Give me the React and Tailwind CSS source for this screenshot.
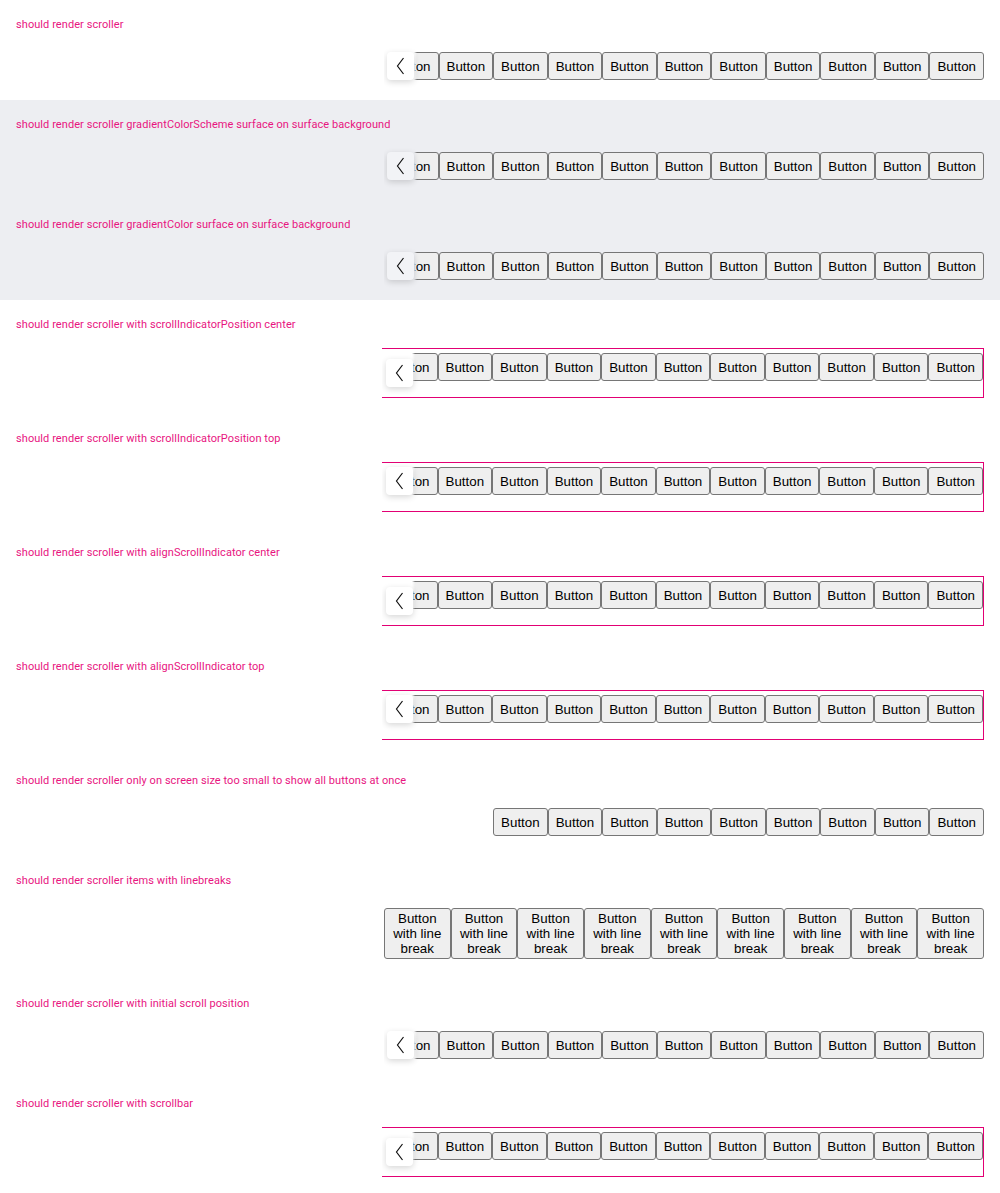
const SECTIONS = [
  { label: 'should render scroller', arrow: 'top' },
  { label: 'should render scroller gradientColorScheme surface on surface background', arrow: 'top', surface: true },
  { label: 'should render scroller gradientColor surface on surface background', arrow: 'top', surface: true },
  { label: 'should render scroller with scrollIndicatorPosition center', arrow: 'center', boxed: true },
  { label: 'should render scroller with scrollIndicatorPosition top', arrow: 'top', boxed: true },
  { label: 'should render scroller with alignScrollIndicator center', arrow: 'center', boxed: true },
  { label: 'should render scroller with alignScrollIndicator top', arrow: 'top', boxed: true },
  { label: 'should render scroller only on screen size too small to show all buttons at once', count: 9, noArrow: true },
  { label: 'should render scroller items with linebreaks', count: 9, noArrow: true, linebreak: true },
  { label: 'should render scroller with initial scroll position', arrow: 'top' },
  { label: 'should render scroller with scrollbar', arrow: 'center', boxed: true },
]

function Chevron() {
  return (
    <svg width="9" height="18" viewBox="0 0 9 18" fill="none">
      <polyline points="7.5,1 1.5,9 7.5,17" stroke="#111" strokeWidth="1.2" strokeLinejoin="miter" />
    </svg>
  )
}

function Btn({ linebreak }) {
  if (linebreak) {
    return (
      <button className="flex-1 min-w-0 py-[2px] px-[4px] bg-[#efefef] border border-[#767676] rounded-[3px] text-[13.333px] leading-[15px] text-black text-center font-['Liberation_Sans',Arial,sans-serif]">
        Button
        <br />
        with line
        <br />
        break
      </button>
    )
  }
  return (
    <button className="shrink-0 h-[28px] px-[7px] bg-[#efefef] border border-[#767676] rounded-[3px] text-[13.333px] leading-[15px] text-black font-['Liberation_Sans',Arial,sans-serif]">
      Button
    </button>
  )
}

function Scroller({ count = 11, arrow, boxed, surface, noArrow, linebreak }) {
  const fade = surface
    ? 'bg-[linear-gradient(to_right,#edeef2_0px,#edeef2_30px,rgba(237,238,242,0)_33px)]'
    : 'bg-[linear-gradient(to_right,#fff_0px,#fff_30px,rgba(255,255,255,0)_33px)]'
  return (
    <div
      className={
        'relative overflow-hidden pt-1 pb-4 ' +
        (boxed ? 'w-[602px] border-t border-r border-b border-[#e20074]' : 'w-[600px]')
      }
    >
      <div className="flex justify-end">
        {Array.from({ length: count }).map((_, i) => (
          <Btn key={i} linebreak={linebreak} />
        ))}
      </div>
      {!noArrow && (
        <>
          <div className={'absolute left-0 top-0 bottom-0 w-[33px] ' + fade} />
          <div
            className={
              'absolute w-[27px] h-[28px] rounded-[4px] flex items-center justify-center shadow-[0_2px_6px_rgba(0,0,0,0.16)] ' +
              (boxed ? 'left-[4px] ' : 'left-[3px] ') +
              (surface ? 'bg-[#f2f3f6] ' : 'bg-white ') +
              (arrow === 'center' ? 'top-1/2 -translate-y-1/2' : 'top-1')
            }
          >
            <Chevron />
          </div>
        </>
      )}
    </div>
  )
}

export default function App() {
  return (
    <div className="w-[1000px] bg-white">
      {SECTIONS.map((s, i) => (
        <section
          key={i}
          className={
            'px-4 pt-[18px] ' + (s.boxed ? 'pb-4 ' : 'pb-1 ') + (s.surface ? 'bg-[#edeef2]' : 'bg-white')
          }
        >
          <p className="h-[14px] leading-[14px] mb-4 text-[11px] text-[#e8157f] font-['Roboto',sans-serif] tracking-[0.07px]">
            {s.label}
          </p>
          <div className="flex justify-end">
            <Scroller {...s} />
          </div>
        </section>
      ))}
    </div>
  )
}
